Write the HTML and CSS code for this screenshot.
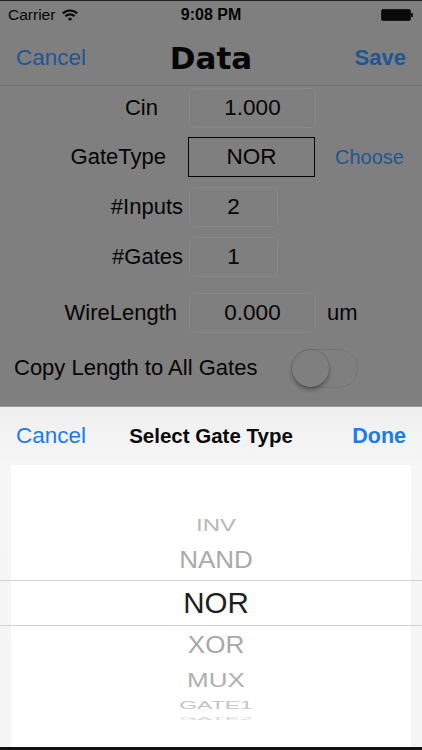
FILE: index.html
```html
<!DOCTYPE html>
<html lang="en">
<head>
  <meta charset="UTF-8" />
  <meta name="viewport" content="width=device-width, initial-scale=1.0"/>
  <title>Data</title>
  <link rel="stylesheet" href="styles.css">
</head>
<body>

  <div class="screen">
    <div class="dimmed">
      <div class="status-bar">
        <div class="carrier">
          Carrier
          <svg class="wifi" width="16" height="12" viewBox="0 0 16 12">
            <path d="M8 12 L5.9 9.9 A3 3 0 0 1 10.1 9.9 Z" fill="#0a0a0a"/>
            <path d="M3.4 7.2 A6.6 6.6 0 0 1 12.6 7.2" fill="none" stroke="#0a0a0a" stroke-width="2.1"/>
            <path d="M0.8 4.4 A10.3 10.3 0 0 1 15.2 4.4" fill="none" stroke="#0a0a0a" stroke-width="2.1"/>
          </svg>
        </div>
        <div class="clock">9:08 PM</div>
        <div class="battery"><span class="battery-body"></span><span class="battery-nub"></span></div>
      </div>

      <div class="nav-bar">
        <a class="nav-link">Cancel</a>
        <h1 class="nav-title">Data</h1>
        <a class="nav-link nav-save">Save</a>
      </div>

      <div class="form">
        <div class="row row-cin">
          <label class="label">Cin</label>
          <div class="field">1.000</div>
        </div>
        <div class="row row-gate">
          <label class="label">GateType</label>
          <div class="field field-boxed">NOR</div>
          <a class="choose">Choose</a>
        </div>
        <div class="row">
          <label class="label">#Inputs</label>
          <div class="field field-short">2</div>
        </div>
        <div class="row">
          <label class="label">#Gates</label>
          <div class="field field-short">1</div>
        </div>
        <div class="row row-wire">
          <label class="label">WireLength</label>
          <div class="field">0.000</div>
          <span class="unit">um</span>
        </div>
        <div class="copy-row">
          <span class="copy-label">Copy Length to All Gates</span>
          <div class="toggle"><span class="knob"></span></div>
        </div>
      </div>
    </div>

    <div class="sheet">
      <div class="sheet-bar">
        <a class="sheet-link">Cancel</a>
        <span class="sheet-title">Select Gate Type</span>
        <a class="sheet-link sheet-done">Done</a>
      </div>
      <div class="picker">
        <div class="item item-inv"><span>INV</span></div>
        <div class="item item-nand"><span>NAND</span></div>
        <div class="item item-selected"><span>NOR</span></div>
        <div class="item item-xor"><span>XOR</span></div>
        <div class="item item-mux"><span>MUX</span></div>
        <div class="item item-gate1"><span>GATE1</span></div>
        <div class="item item-gate2"><span>GATE2</span></div>
      </div>
    </div>
  </div>

</body>
</html>
```

FILE: styles.css
```css
body {
  margin: 0;
  font-family: 'Liberation Sans', Arial, sans-serif;
  background: #7f7f7f;
}

.screen {
  width: 422px;
  height: 750px;
  display: flex;
  flex-direction: column;
  overflow: hidden;
}

/* dimmed form behind the sheet */
.dimmed {
  height: 406px;
  background: #7f7f7f;
  border-top: 1px solid #222;
  box-sizing: border-box;
  color: #050505;
}

.status-bar {
  height: 26px;
  padding: 1px 8px 0;
  display: flex;
  align-items: center;
  justify-content: space-between;
  font-size: 15.5px;
}

.carrier {
  width: 120px;
  display: flex;
  align-items: center;
  gap: 7px;
}

.clock {
  font-weight: bold;
  font-size: 16px;
}

.battery {
  width: 120px;
  display: flex;
  justify-content: flex-end;
  align-items: center;
}

.battery-body {
  width: 28px;
  height: 10px;
  background: #0a0a0a;
  border: 1px solid #1a1a1a;
  border-radius: 2px;
}

.battery-nub {
  width: 2px;
  height: 4px;
  background: #1a1a1a;
  margin-right: 1px;
}

.nav-bar {
  height: 58px;
  display: flex;
  align-items: center;
  justify-content: space-between;
  padding: 2px 16px 0;
  border-bottom: 1px solid #747474;
  box-sizing: border-box;
}

.nav-link {
  width: 90px;
  color: #1f5594;
  font-size: 22.5px;
}

.nav-save {
  text-align: right;
  font-weight: bold;
  font-size: 22px;
}

.nav-title {
  margin: 0;
  font-family: 'DejaVu Sans', sans-serif;
  font-weight: bold;
  font-size: 31px;
  color: #050505;
}

.form {
  padding-top: 2px;
  display: flex;
  flex-direction: column;
  gap: 10px;
}

.row {
  height: 40px;
  display: flex;
  align-items: center;
  font-size: 22px;
}

.label {
  width: 189px;
  box-sizing: border-box;
  padding-right: 6px;
  text-align: right;
}

.row-cin .label {
  padding-right: 31px;
}

.row-gate {
  margin-top: -1px;
}

.row-gate .label {
  padding-right: 23px;
}

.row-wire {
  margin-top: 6px;
}

.row-wire .label {
  padding-right: 12px;
}

.field {
  width: 127px;
  height: 40px;
  box-sizing: border-box;
  border: 1px solid #888;
  border-radius: 6px;
  display: flex;
  align-items: center;
  justify-content: center;
  font-size: 22.5px;
}

.field-short {
  width: 89px;
}

.field-boxed {
  border: 1.5px solid #050505;
  border-radius: 0;
  margin-left: -1px;
}

.choose {
  margin-left: 20px;
  color: #1f5594;
  font-size: 20px;
}

.unit {
  margin-left: 11px;
  font-size: 22px;
}

.copy-row {
  margin-top: 5px;
  height: 40px;
  display: flex;
  align-items: center;
  padding-left: 14px;
  font-size: 22px;
}

.copy-label {
  width: 278px;
}

.toggle {
  width: 66px;
  height: 39px;
  box-sizing: border-box;
  border: 1.5px solid #747474;
  border-radius: 20px;
  display: flex;
  align-items: center;
}

.knob {
  width: 37px;
  height: 37px;
  border-radius: 50%;
  background: #7f7f7f;
  box-shadow: 0 3px 4px rgba(0, 0, 0, 0.3), 0 0 0 1px rgba(0, 0, 0, 0.08);
  margin-left: -1px;
}

/* picker sheet */
.sheet {
  flex: 1;
  background: linear-gradient(#efefef, #f6f6f6 60px, #f5f5f5);
  border-top: 1px solid #9a9a9a;
  border-bottom: 3px solid #111;
  display: flex;
  flex-direction: column;
}

.sheet-bar {
  height: 58px;
  display: flex;
  align-items: center;
  justify-content: space-between;
  padding: 0 16px;
}

.sheet-link {
  width: 90px;
  color: #1a7cec;
  font-size: 22.5px;
}

.sheet-done {
  text-align: right;
  font-weight: bold;
  font-size: 21.5px;
}

.sheet-title {
  font-weight: bold;
  font-size: 20.5px;
  color: #0a0a0a;
}

.picker {
  flex: 1;
  margin: 0 11px;
  padding-top: 45px;
  background: #fff;
  display: flex;
  flex-direction: column;
  color: #b0b0b0;
}

.item {
  display: flex;
  align-items: center;
  justify-content: center;
  padding-left: 10px;
  line-height: 1;
}

.item span {
  display: inline-block;
}

.item-inv {
  height: 30px;
  font-size: 24px;
  color: #b8b8b8;
}

.item-inv span {
  transform: scaleY(0.72);
}

.item-nand {
  height: 40px;
  font-size: 26px;
  color: #aaaaaa;
}

.item-nand span {
  transform: scaleY(0.9);
}

.item-selected {
  height: 44px;
  margin: 0 -11px;
  padding-left: 10px;
  border-top: 1px solid #d2d2d2;
  border-bottom: 1px solid #d2d2d2;
  font-size: 29.5px;
  color: #202020;
}

.item-xor {
  height: 38px;
  font-size: 26px;
  color: #a8a8a8;
}

.item-xor span {
  transform: scaleY(0.92);
}

.item-mux {
  height: 32px;
  font-size: 26px;
  color: #b0b0b0;
}

.item-mux span {
  transform: scaleY(0.75);
}

.item-gate1 {
  height: 18px;
  font-size: 23px;
  color: #c4c4c4;
}

.item-gate1 span {
  transform: scaleY(0.45);
}

.item-gate2 {
  height: 8px;
  font-size: 23px;
  color: #d8d8d8;
}

.item-gate2 span {
  transform: scaleY(0.15);
}
```
